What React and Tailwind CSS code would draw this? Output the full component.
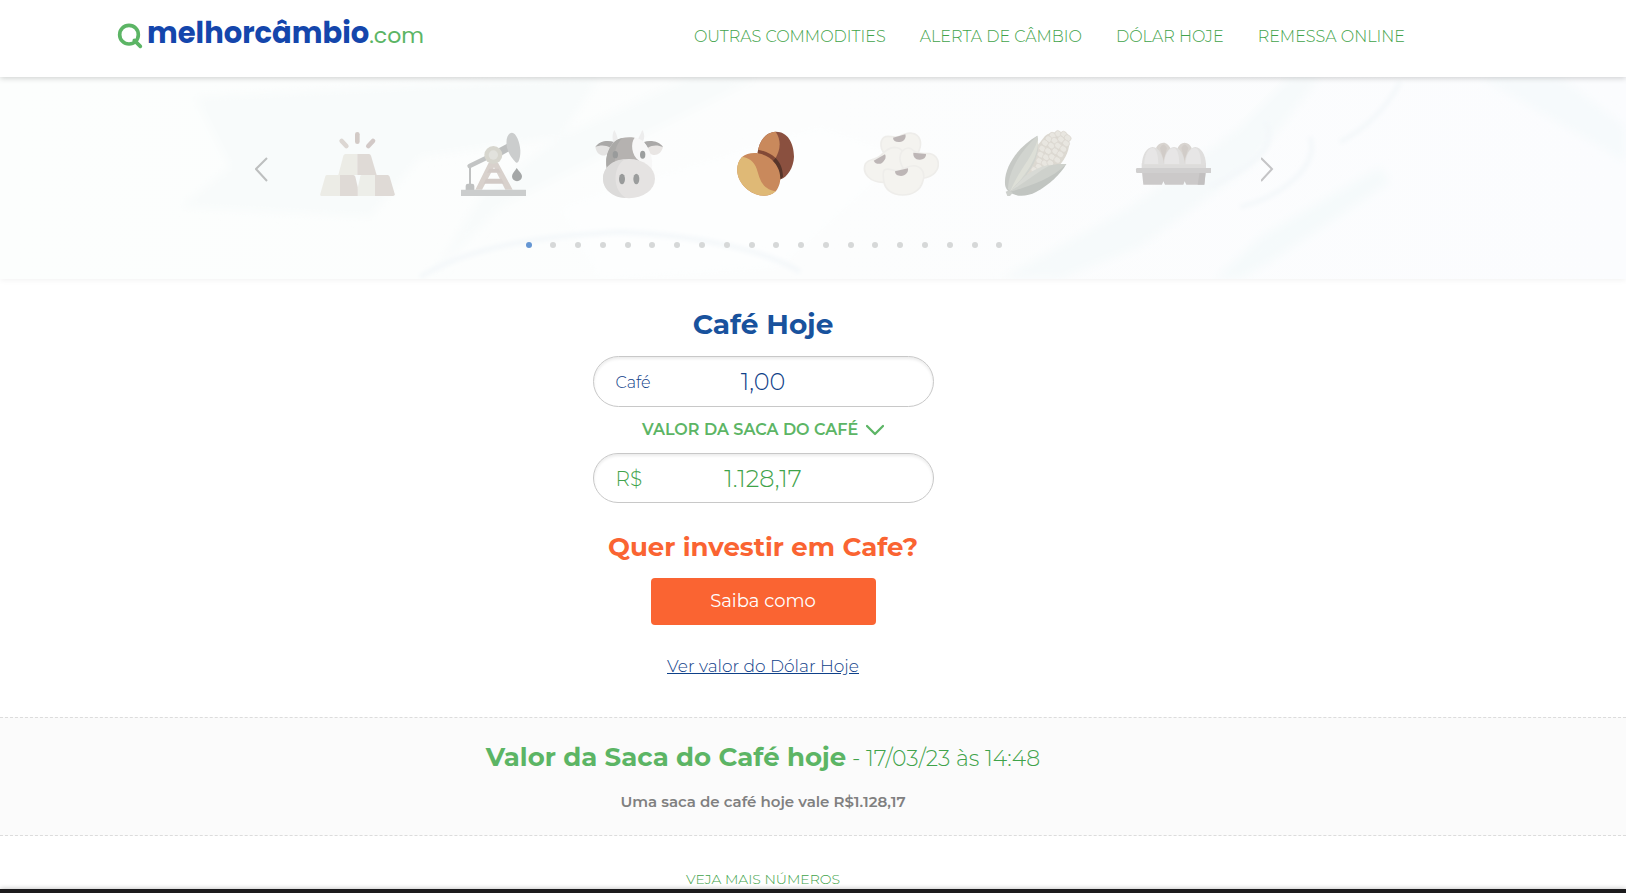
import React from 'react';

const navLinks = ['OUTRAS COMMODITIES', 'ALERTA DE CÂMBIO', 'DÓLAR HOJE', 'REMESSA ONLINE'];

function SearchMark() {
  return (
    <svg className="mt-1 h-[26px] w-[26px]" viewBox="0 0 78 78" fill="none" aria-hidden="true">
      <circle cx="36" cy="35" r="28" stroke="#5cb565" strokeWidth="11" />
      <path d="M52 52 70 70" stroke="#5cb565" strokeWidth="11" strokeLinecap="round" />
    </svg>
  );
}

function Gold() {
  return (
    <svg className="h-[72px] w-[76px]" viewBox="237 27 228 216" aria-hidden="true">
      <g strokeWidth="14" strokeLinecap="round">
        <path d="M305 63 319 78" stroke="#dcd7d3" />
        <path d="M352 43V65" stroke="#d2cac6" />
        <path d="M399 63 385 78" stroke="#d2c9c7" />
      </g>
      <path d="M316 102H352V165H295L310 107Q312 102 316 102Z" fill="#ecece6" />
      <path d="M352 102H387Q391 102 393 107L410 165H352Z" fill="#dfdad6" />
      <path d="M261 165H300V228H246Q239 228 241 221L256 169Q257 165 261 165Z" fill="#ecece6" />
      <path d="M300 165H340Q344 165 346 170L354 205V228H300Z" fill="#dfdad6" />
      <path d="M365 165H405V228H353V205L361 169Q362 165 365 165Z" fill="#edeee9" />
      <path d="M405 165H443Q447 165 449 170L464 221Q466 228 459 228H405Z" fill="#dfdad6" />
    </svg>
  );
}

function PumpJack() {
  return (
    <svg className="h-[72px] w-[76px]" viewBox="645 27 228 216" aria-hidden="true">
      <path d="M690 138V196" stroke="#bfc1c1" strokeWidth="6" />
      <path d="M689 138 800 84" stroke="#c2c4c4" strokeWidth="14" strokeLinecap="round" />
      <path d="M776 85 804 70 810 92 783 107Z" fill="#bdbfbf" />
      <path d="M746 128H774L818 209H796L762 142 726 209H706Z" fill="#d8d1cc" />
      <path d="M748 146H776L782 158H741ZM738 176H785L792 191H731Z" fill="#d2cac6" />
      <path d="M816 38C803 39 796 58 801 83 806 103 821 122 829 128 835 132 842 113 841 91 840 66 828 38 816 38Z" fill="#cbcdcd" />
      <circle cx="760" cy="105" r="27" fill="#d7d6ce" />
      <circle cx="760" cy="105" r="14" fill="#e2e2dd" />
      <path d="M830 144C825 153 816 160 816 169A15 15 0 0 0 846 169C846 160 836 153 830 144Z" fill="#a4a7a7" />
      <path d="M677 210V198Q677 191 684 191H696Q703 191 703 198V210Z" fill="#bfc1c1" />
      <rect x="663" y="209" width="195" height="19" rx="1" fill="#cbcdcd" />
    </svg>
  );
}

function Cow() {
  return (
    <svg className="h-[72px] w-[76px]" viewBox="33 27 228 216" aria-hidden="true">
      <path d="M101 68C95 54 98 39 103 30 109 40 112 50 114 62ZM173 60C178 50 182 40 187 30 195 42 194 57 187 69Z" fill="#ededed" />
      <path d="M46 81C57 65 83 61 99 66L85 100C72 114 50 106 46 81Z" fill="#e4e3e2" />
      <path d="M46 81C56 63 84 59 102 66L92 84C76 74 59 76 46 81Z" fill="#aaa9a8" />
      <path d="M249 81C238 63 211 60 196 66L208 99C223 112 244 103 249 81Z" fill="#e9e6e4" />
      <path d="M249 81C238 64 211 59 192 66L203 84C219 73 236 76 249 81Z" fill="#aaa9a8" />
      <path d="M147 51C180 51 198 65 209 95 216 112 218 126 215 150H80C76 129 79 107 88 87 100 61 118 51 147 51Z" fill="#f7f7f7" />
      <path d="M164 53C151 69 154 106 177 122L160 150H80C76 129 79 107 88 87 100 61 123 48 164 53Z" fill="#b5b2b0" />
      <path d="M127 54C105 76 103 101 105 123L82 143C75 120 80 98 92 80 102 64 112 57 127 54Z" fill="#aaa9a7" />
      <ellipse cx="106" cy="104" rx="8" ry="11" fill="#999b9b" />
      <ellipse cx="188" cy="104" rx="8" ry="12" fill="#9b9e9e" />
      <ellipse cx="147" cy="176" rx="78" ry="59" fill="#e5e3e2" />
      <path d="M134 118C96 143 98 212 138 234 94 232 69 205 69 176 69 144 96 120 134 118Z" fill="#dcdbda" />
      <ellipse cx="126" cy="177" rx="9" ry="16" fill="#999b9b" />
      <ellipse cx="169" cy="177" rx="9" ry="16" fill="#9b9d9d" />
    </svg>
  );
}

function Coffee() {
  return (
    <svg className="h-[72px] w-[76px]" viewBox="441 27 228 216" aria-hidden="true">
      <path d="M587 35C621 34 642 67 642 110 641 143 622 171 602 178 590 138 570 112 533 99 537 62 558 36 587 35Z" fill="#8a503f" />
      <path d="M587 35C604 60 603 91 583 120L533 99C537 62 558 36 587 35Z" fill="#c9895c" />
      <path d="M534 89C560 94 574 103 586 113L578 126C565 110 546 105 533 104Z" fill="#824936" />
      <path d="M586 113C600 126 609 145 609 170L601 179C598 154 591 137 577 126Z" fill="#56352a" />
      <path d="M486 111C506 94 541 95 568 113 599 136 609 174 594 203 590 211 587 214 583 217 567 233 532 231 503 209 468 181 462 137 486 111Z" fill="#c9895c" />
      <path d="M486 111C505 111 523 126 530 146 539 173 543 206 587 214 567 233 532 231 503 209 468 181 462 137 486 111Z" fill="#dfb976" />
    </svg>
  );
}

function Beans() {
  return (
    <svg className="h-[72px] w-[76px]" viewBox="39 27 228 216" aria-hidden="true">
      <g fill="#f4f3ef" stroke="#eeedea" strokeWidth="5">
        <path d="M102 52C115 43 128 56 147 50 162 42 174 37 187 40 211 44 216 70 208 89 204 112 174 116 155 115 124 117 95 104 93 77 92 67 94 59 102 52Z" />
        <path d="M46 132C57 115 76 121 91 108 105 95 113 83 132 82 154 82 166 98 164 121 162 153 132 184 99 187 61 187 35 161 46 132Z" />
        <path d="M156 94C169 80 181 82 192 93 206 104 219 99 238 101 261 104 271 128 261 149 248 174 216 180 187 168 158 155 140 118 156 94Z" />
        <path d="M103 150C116 140 130 157 151 151 167 146 177 133 198 138 219 143 226 164 218 185 211 211 187 225 158 225 126 225 104 209 101 181 99 168 97 158 103 150Z" />
      </g>
      <g fill="#bdb6b6">
        <path d="M129 53 166 43C170 55 161 65 149 66 137 67 130 63 129 53Z" />
        <path d="M71 122 105 103C111 112 102 127 92 131 82 133 76 130 71 122Z" />
        <path d="M190 98 228 102C229 113 219 120 208 119 196 118 189 111 190 98Z" />
        <path d="M135 154 174 145C176 157 166 168 153 168 142 168 135 163 135 154Z" />
      </g>
    </svg>
  );
}

const kernels = [
  [608, 47], [625, 42], [642, 44], [653, 54], [596, 57], [614, 62], [633, 58], [648, 70],
  [585, 69], [604, 77], [624, 77], [640, 87], [577, 86], [594, 93], [616, 94], [631, 103],
  [572, 104], [588, 112], [606, 111], [622, 120], [568, 123], [584, 130], [601, 129], [566, 140], [553, 150],
];

function Corn() {
  return (
    <svg className="h-[72px] w-[76px]" viewBox="447 27 228 216" aria-hidden="true">
      <path d="M585 48C605 30 650 34 658 56 661 89 645 115 632 132L525 170 552 90Z" fill="#dcd9d1" />
      {kernels.map(([x, y]) => (
        <ellipse key={`${x}-${y}`} cx={x} cy={y} rx="11" ry="9" fill="#e8e6e0" stroke="#d9d6ce" strokeWidth="2" transform={`rotate(40 ${x} ${y})`} />
      ))}
      <path d="M562 47C507 78 462 138 465 191 466 205 473 214 482 217L528 165C552 134 571 90 562 47Z" fill="#c6c9c5" />
      <path d="M562 47C514 91 475 150 474 207L482 214 528 165C557 130 570 92 562 47Z" fill="#d1d4cf" />
      <path d="M564 58C566 98 548 145 481 214 503 155 544 119 564 58Z" fill="#dddfd7" />
      <path d="M649 132C573 135 522 163 480 217 500 232 531 230 558 216 598 194 631 164 649 132Z" fill="#c1c5c1" />
      <path d="M649 132C567 131 522 164 481 215 524 203 603 180 649 132Z" fill="#ced1cc" />
      <path d="M603 134C558 139 522 166 482 213 524 188 562 155 603 134Z" fill="#d8dad5" />
      <path d="M467 215 478 211 488 219 480 228H472Z" fill="#cdd0cc" />
    </svg>
  );
}

function Eggs() {
  return (
    <svg className="h-[72px] w-[76px]" viewBox="45 27 228 216" aria-hidden="true">
      <path d="M108 84C112 75 120 68 130 68S147 76 151 84L131 135ZM173 84C177 75 184 68 194 68S211 75 215 84L194 135Z" fill="#d8d4d0" />
      <path d="M120 84Q130 63 141 84L131 120ZM184 84Q194 63 205 84L194 120Z" fill="#d1ccc8" />
      <path d="M65 146V130H258V146Z" fill="#dddcdb" />
      <path d="M66 134C66 106 80 81 98 81S131 108 131 134ZM131 134C131 108 144 81 162 81S194 108 194 134ZM194 134C194 108 209 81 226 81S258 106 258 134Z" fill="#dfdedd" />
      <path d="M73 132C73 107 83 84 98 84 109 84 115 107 115 132ZM133 132C133 107 145 84 161 84 172 84 178 107 178 132ZM197 132C197 107 209 84 224 84 237 84 243 107 243 132Z" fill="#e7e6e6" />
      <path d="M66 156H257L253 194H199L194 184 190 194H135L130 184 126 194H70Z" fill="#cbc9c9" />
      <path d="M239 156H257L253 194H233Z" fill="#c2c0c0" />
      <rect x="48" y="144" width="228" height="15" rx="4" fill="#d0cfcf" />
    </svg>
  );
}

const commodities = [
  { name: 'Ouro', Icon: Gold },
  { name: 'Petróleo', Icon: PumpJack },
  { name: 'Boi gordo', Icon: Cow },
  { name: 'Café', Icon: Coffee },
  { name: 'Soja', Icon: Beans },
  { name: 'Milho', Icon: Corn },
  { name: 'Ovos', Icon: Eggs },
];

const heroTexture = (
  <svg className="absolute inset-0 h-full w-full" viewBox="0 0 1626 202" preserveAspectRatio="none" aria-hidden="true">
    <defs>
      <filter id="soft" x="-20%" y="-20%" width="140%" height="140%">
        <feGaussianBlur stdDeviation="5" />
      </filter>
      <filter id="line" x="-20%" y="-20%" width="140%" height="140%">
        <feGaussianBlur stdDeviation="2" />
      </filter>
      <linearGradient id="wash" x1="0" x2="1">
        <stop offset="0" stopColor="#fcfefd" />
        <stop offset="0.5" stopColor="#fcfdfd" />
        <stop offset="1" stopColor="#fbfcfe" />
      </linearGradient>
    </defs>
    <rect width="1626" height="202" fill="url(#wash)" />
    <g filter="url(#soft)">
      <path d="M195 20 600 0 560 60 420 80 370 140 180 130 230 90Z" fill="#f8fbfb" />
      <path d="M430 202 500 130 620 70 760 0 690 0 560 60 480 120Z" fill="#f8fbfb" />
      <path d="M560 130 820 50 900 80 780 190 600 202Z" fill="#fdfefe" />
      <path d="M1000 202 1130 130 1240 50 1290 0 1320 0 1250 90 1140 170 1060 202Z" fill="#f6fafb" />
      <path d="M1215 202 1260 160 1380 90 1390 105 1270 185 1240 202Z" fill="#f5fafb" />
      <path d="M1480 0 1560 0 1626 50 1626 85Z" fill="#f6fafc" />
    </g>
    <g fill="none" stroke="#f4f8fa" strokeWidth="5" filter="url(#line)">
      <path d="M1265 45C1280 70 1250 90 1210 110M1310 60C1320 90 1280 120 1240 130M1400 5C1385 35 1360 55 1340 65" />
      <path d="M420 200C460 175 520 160 620 155 700 158 770 175 800 195" />
    </g>
  </svg>
);

export default function App() {
  return (
    <div className="flex min-h-screen flex-col bg-white font-['Montserrat','Inter',sans-serif]">
      <header className="relative z-10 h-[77px] bg-white shadow-[0_1px_6px_rgba(0,0,0,0.2)]">
        <div className="mx-auto flex max-w-[1392px] items-start justify-between pr-[104px]">
          <a href="#" className="flex items-start gap-1 pt-[19px]" aria-label="melhorcâmbio.com">
            <SearchMark />
            <span className="flex items-baseline font-['Poppins','Montserrat',sans-serif] leading-7">
              <span className="text-[29px] font-bold text-[#1446ac]">melhorcâmbio</span>
              <span className="text-[22px] leading-6 text-[#5cb565]">.com</span>
            </span>
          </a>
          <nav className="flex gap-[34px] pt-[25px] text-base leading-6 font-light text-[#3fa34a]">
            {navLinks.map((t) => (
              <a key={t} href="#">{t}</a>
            ))}
          </nav>
        </div>
      </header>

      <section className="relative h-[202px] shadow-[0_1px_6px_rgba(0,0,0,0.06)]">
        {heroTexture}
        <div className="relative flex flex-col items-center pt-[52px] pr-24">
          <div className="flex items-center gap-5">
            <button type="button" aria-label="Anterior" className="pt-2">
              <svg width="14" height="26" viewBox="0 0 14 26" fill="none" stroke="#bdbfbf" strokeWidth="2"><path d="M12 2 1 13 12 25" /></svg>
            </button>
            <div className="flex">
              {commodities.map(({ name, Icon }) => (
                <a key={name} href="#" aria-label={name} className="flex w-[136px] justify-center">
                  <Icon />
                </a>
              ))}
            </div>
            <button type="button" aria-label="Próximo" className="pt-2">
              <svg width="14" height="26" viewBox="0 0 14 26" fill="none" stroke="#c4c4c6" strokeWidth="2"><path d="M0 2 11 13 0 25" /></svg>
            </button>
          </div>
          <div className="mt-[41px] mr-0.5 flex w-[477px] justify-between">
            {Array.from({ length: 20 }, (_, i) => (
              <span key={i} className={i === 0 ? 'h-1.5 w-1.5 rounded-full bg-[#6596d3]' : 'h-1.5 w-1.5 rounded-full bg-[#d6d8d8]'} />
            ))}
          </div>
        </div>
      </section>

      <main className="flex flex-1 flex-col">
        <section className="flex flex-col items-center pt-[27px] pr-[100px] pb-[39px]">
          <h1 className="text-[28px] leading-9 font-bold text-[#18529d]">Café Hoje</h1>
          <div className="mt-[14px] flex h-[51px] w-[341px] items-center rounded-full border border-[#c8c8c8] px-[22px] shadow-[inset_0_2px_3px_rgba(0,0,0,0.08)]">
            <label htmlFor="qty" className="w-20 pt-0.5 text-base font-light text-[#0f4189]">Café</label>
            <input id="qty" defaultValue="1,00" className="w-0 flex-1 bg-transparent text-center text-2xl font-light text-[#0f4189] outline-none" />
            <span className="w-20" />
          </div>
          <button type="button" className="mt-[11px] flex items-center gap-2 text-base leading-6 font-semibold text-[#5cb565]">
            VALOR DA SACA DO CAFÉ
            <svg width="18" height="12" viewBox="0 0 18 12" fill="none" stroke="currentColor" strokeWidth="2.3" strokeLinecap="round" strokeLinejoin="round" aria-hidden="true"><path d="M1 2 9 10 17 2" /></svg>
          </button>
          <div className="mt-[11px] flex h-[50px] w-[341px] items-center rounded-full border border-[#c8c8c8] px-[22px] pt-0.5 shadow-[inset_0_2px_3px_rgba(0,0,0,0.08)]">
            <label htmlFor="brl" className="w-20 text-xl font-light text-[#3fa34a]">R$</label>
            <input id="brl" defaultValue="1.128,17" className="w-0 flex-1 bg-transparent text-center text-2xl font-light text-[#3fa34a] outline-none" />
            <span className="w-20" />
          </div>
          <h2 className="mt-[26px] text-[26px] leading-9 font-bold text-[#fa6432]">Quer investir em Cafe?</h2>
          <button type="button" className="mt-[13px] h-[47px] w-[225px] rounded bg-[#fa6432] pb-0.5 text-lg text-white">Saiba como</button>
          <a href="#" className="mt-[29px] text-[17px] leading-6 font-light text-[#0f4189] underline">Ver valor do Dólar Hoje</a>
        </section>

        <section className="flex h-[119px] flex-col items-center border-y border-dashed border-[#dcdcdc] bg-[#fbfbfb] pt-[21px] pr-[100px]">
          <h2 className="text-[22px] leading-9 font-light text-[#3fa34a]">
            <strong className="text-[26px] font-bold text-[#5cb565]">Valor da Saca do Café hoje</strong> - 17/03/23 às 14:48
          </h2>
          <p className="mt-[13px] text-[15px] leading-6 font-semibold text-[#808080]">Uma saca de café hoje vale R$1.128,17</p>
        </section>

        <div className="flex justify-center pt-[33px] pr-[100px]">
          <a href="#" className="text-sm leading-5 font-light text-[#3fa34a]">VEJA MAIS NÚMEROS</a>
        </div>
      </main>
      <footer className="h-1 bg-[#1c1b1d] shadow-[0_0_5px_rgba(0,0,0,0.3)]" />
    </div>
  );
}
